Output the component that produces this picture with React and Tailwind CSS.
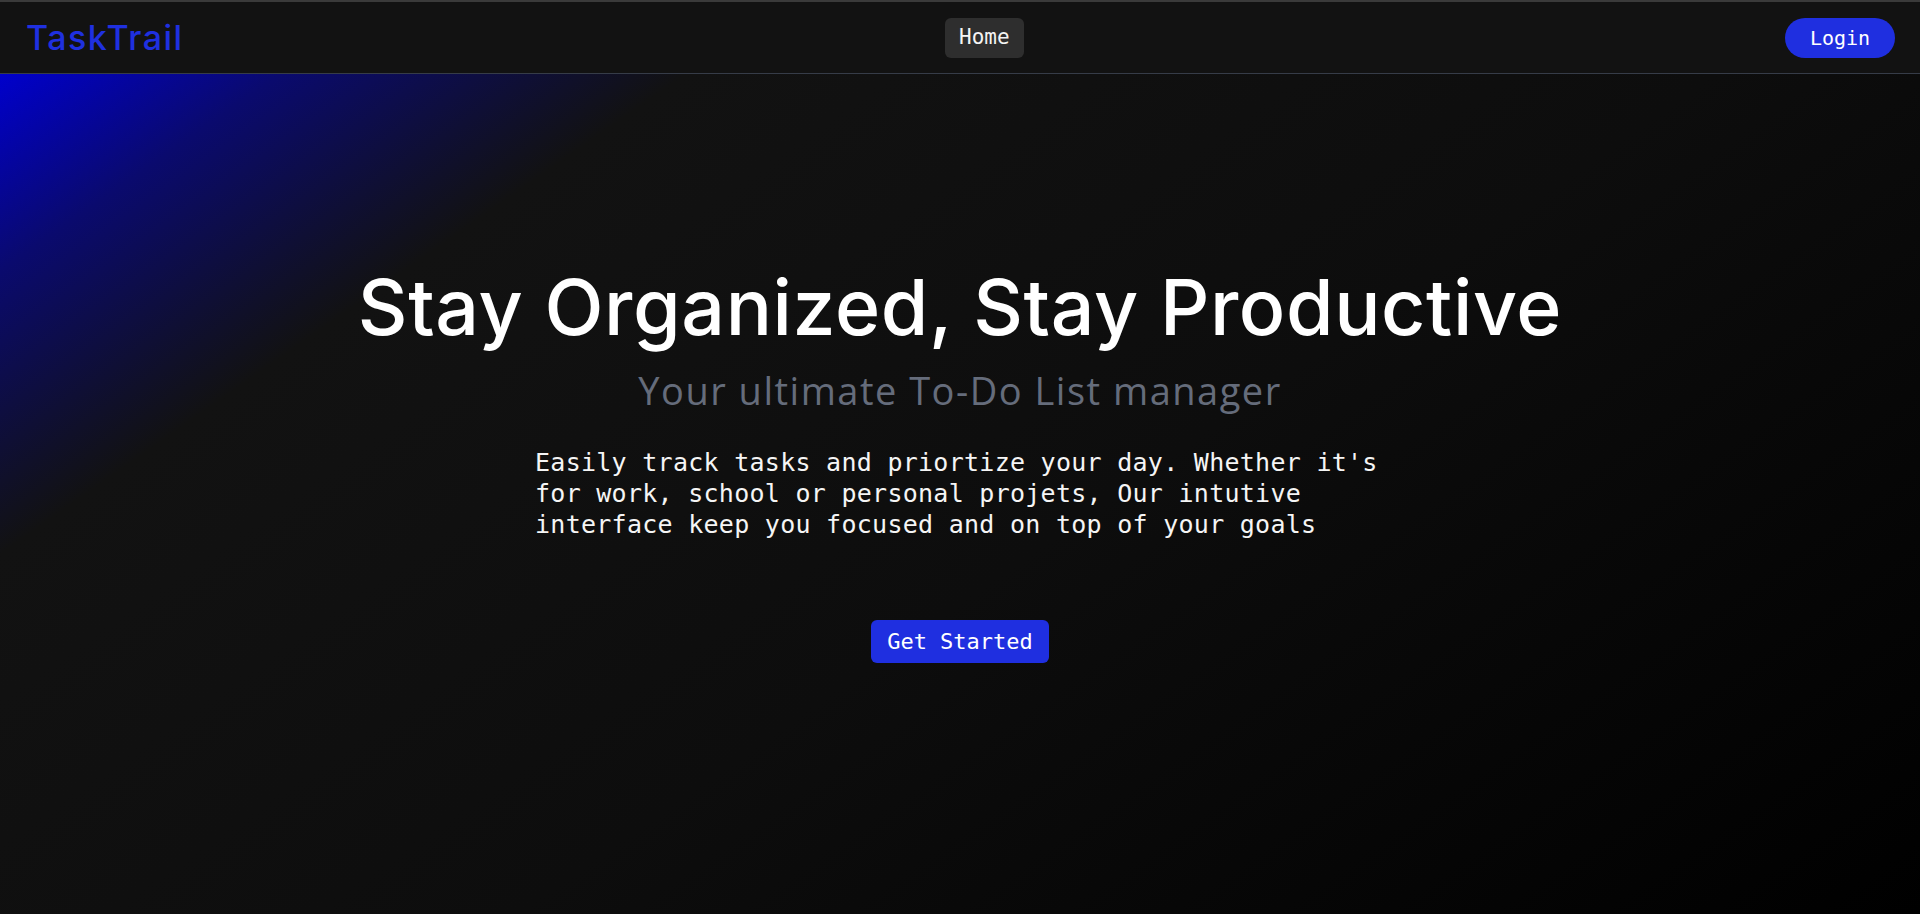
export default function App() {
  return (
    <div className="flex h-[914px] w-full flex-col overflow-hidden bg-black">
      <nav className="flex h-[74px] shrink-0 items-center justify-between border-t-2 border-b border-t-[#3a3a3a] border-b-[#363c48] bg-[#121212] pl-[26px] pr-[25px]">
        <a href="#" className="font-['Inter',sans-serif] text-[34px] font-medium tracking-[1.5px] text-[#1f30e0]">TaskTrail</a>
        <div className="flex items-center">
          <button className="h-10 rounded-md bg-[#2e2e2e] px-[14px] font-['DejaVu_Sans_Mono',monospace] text-[21px] text-[#f4f4f4]">Home</button>
        </div>
        <button className="h-10 w-[110px] rounded-full bg-[#1f2fe0] font-['DejaVu_Sans_Mono',monospace] text-[20px] text-white">Login</button>
      </nav>

      <main className="flex flex-1 flex-col items-center bg-[linear-gradient(145deg,#0000cc_0%,#0a0a6e_9%,#121212_22%,#0d0d0d_55%,#000000_100%)] pt-[188px]">
        <h1 className="font-['Inter',sans-serif] text-[77px] leading-[90px] font-medium tracking-[0.6px] text-white">
          Stay Organized, Stay Productive
        </h1>
        <h2 className="mt-[16px] font-['Open_Sans',sans-serif] text-[38px] leading-[44px] tracking-[1.5px] text-[#656c7b]">
          Your ultimate To-Do List manager
        </h2>
        <p className="mt-[35px] w-[850px] font-['DejaVu_Sans_Mono',monospace] text-[25px] leading-[31px] tracking-[0.27px] text-[#f5f5f5]">
          Easily track tasks and priortize your day. Whether it's for work, school or personal projets, Our intutive interface keep you focused and on top of your goals
        </p>
        <button className="mt-[80px] h-[43px] w-[178px] rounded-md bg-[#1f2fe0] font-['DejaVu_Sans_Mono',monospace] text-[22px] text-white">
          Get Started
        </button>
      </main>
    </div>
  )
}
